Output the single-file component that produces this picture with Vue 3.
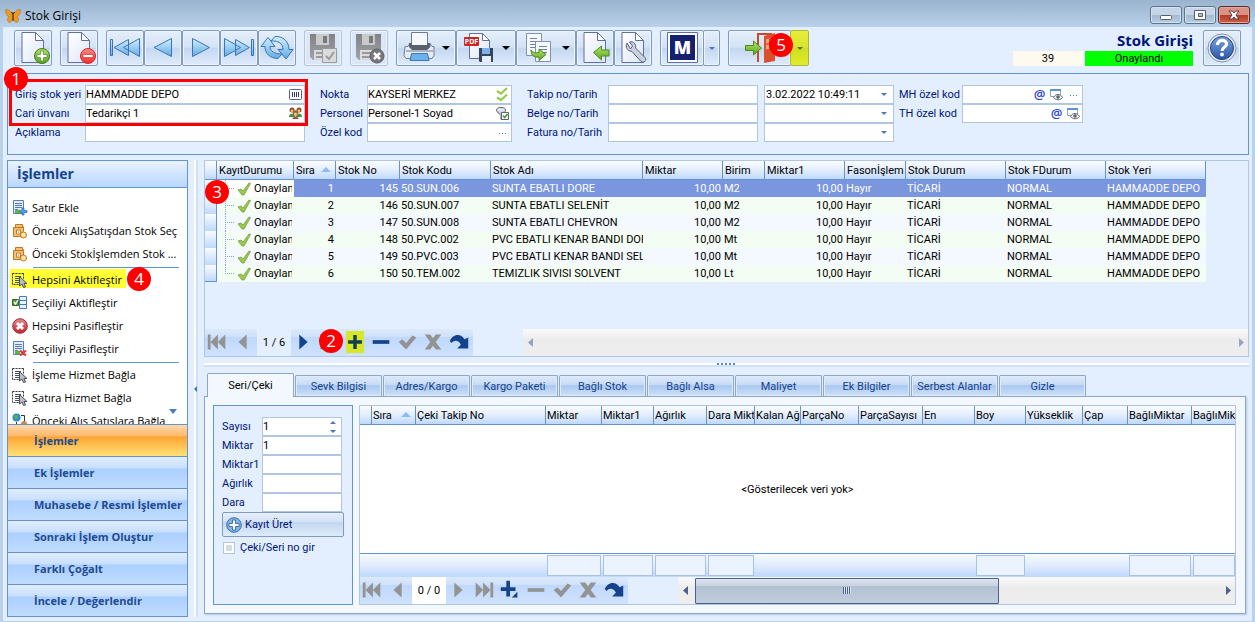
<script setup>
import { ref } from 'vue'

const page = '<path fill="url(#gPage)" stroke="#5f6f9f" d="M6 1.5h13.5l8 8v22H6z"/><path fill="#fff" stroke="#5f6f9f" d="M19.5 1.5v8h8z"/>'
const sheet = '<path fill="#dfeafc" stroke="#5a7cb8" d="M1.5.5h10v13h-10z"/><path stroke="#5a7cb8" d="M3 3.5h7M3 5.5h7M3 7.5h7M3 9.5h3"/><path fill="#5cb82c" d="M3 10h5v3H3z"/>'
const disk = '<path fill="url(#gDisk)" d="M4 3h25v26H7l-3-3z"/><path fill="#c9cacc" d="M10 3h13v11H10z"/><path fill="#77797c" d="M17 5h4v7h-4z"/><path fill="#d9dadc" d="M8 19h17v10H8z"/><path stroke="#98999c" stroke-width="2" d="M10 22h12M10 26h12"/>'
const cursor = '<path fill="none" stroke="#333" stroke-dasharray="2 1" d="M.5 1.5h11M.5 1.5v11h7M11.5 1.5v5"/><path stroke="#46536b" d="M3 4.5h6M3 6.5h5M3 8.5h5M3 10.5h4"/><path fill="#b9bdc6" stroke="#4b4f58" d="M7.500 4.500l7.500 7h-3l1.500 3.500-2 .5-1.500-3.500-2.500 2z"/>'
const crate = '<path fill="#f6bf6c" stroke="#b9792a" d="M1.500 4.500h10v9h-10zM3.500 4.500v-3h7v3"/><path fill="#fff" stroke="#c27a1e" d="M4.500 7h4v4h-4z"/><path fill="#b36b12" d="M6 8.500h1v1H6z"/><circle cx="11.500" cy="12" r="3" fill="#ffe2a0" stroke="#b9792a"/><path stroke="#b9792a" d="M11.500 3.500v5"/>'

const icons = {
  add: page + '<circle cx="26" cy="25" r="7.500" fill="url(#gGreen)" stroke="#3c7a12"/><path fill="#fff" stroke="#3c7a12" stroke-width=".6" d="M24.500 20h3v3.500H31v3h-3.500V30h-3v-3.500H21v-3h3.500z"/>',
  remove: page + '<circle cx="26" cy="25" r="7.500" fill="url(#gRed)" stroke="#d62828"/><path fill="#fff" stroke="#c02020" stroke-width=".6" d="M21 23.500h10v3H21z"/>',
  first: '<path fill="url(#gBlue)" stroke="#3b73b9" d="M2.500 8.500h2v16h-2zM20.500 8.500v16L6 16.500zM31.500 7.500v18l-16-9z"/>',
  prev: '<path fill="url(#gBlue)" stroke="#3b73b9" d="M25.500 7.500v18L8 16.500z"/>',
  next: '<path fill="url(#gBlue)" stroke="#3b73b9" d="M8.500 7.500v18l17-9z"/>',
  last: '<path fill="url(#gBlue)" stroke="#3b73b9" d="M29.500 8.500h2v16h-2zM13.500 8.500v16l14-8zM2.500 7.500v18l16-9z"/>',
  refresh: '<path fill="url(#gBlue)" stroke="#3b73b9" d="M10 15.500h5L8 6.500l-7 9h4c0 7 5 12 13 12l4-4.500c-8 0-12-3-12-7.500z"/><path fill="url(#gBlue)" stroke="#3b73b9" d="M23 18.500h-5l8 9.500 7-9.500h-4c0-8-6-13.500-14-13l-4 4.500c8-.5 12 3 12 8.500z"/>',
  saveOk: disk + '<path fill="#dadbdd" stroke="#9a9b9e" d="M16.500 17.500h14v14h-14z"/><path fill="none" stroke="#9a9b9e" stroke-width="2" d="M20 25l3 3 5-7"/>',
  saveNo: disk + '<circle cx="25" cy="25" r="7" fill="#77787b" stroke="#5f6063"/><path stroke="#fff" stroke-width="2.500" d="M22 22l6 6m0-6l-6 6"/>',
  print: '<path fill="url(#gPage)" stroke="#6d7b93" d="M9.500 1.500h16v14h-16z"/><path fill="#e7ebf2" stroke="#707d96" d="M3 15.500h3l2-3v3l3 3h14l3-3v-3l2 3h2v9l-2 3H4l-2-3z"/><path fill="#56606f" d="M7 12h21v4l-3 3H10l-3-3z"/><path fill="#f4f7fc" d="M10 5h15v9H10z"/><path stroke="#aab4c6" stroke-width="2" d="M4 20h27"/><path fill="#69b2ee" stroke="#4577ad" d="M9.500 22.500h16l1.500 7H8z"/>',
  pdf: '<path fill="url(#gPage)" stroke="#5f6f9f" d="M7.500 2.500h13l7 7v18h-20z"/><path fill="#fff" stroke="#5f6f9f" d="M20.500 2.500v7h7z"/><rect x="2" y="6" width="15" height="9" rx="1" fill="#cf2424"/><text x="9.500" y="13" text-anchor="middle" font-size="7" font-weight="700" fill="#fff" font-family="Open Sans, sans-serif">PDF</text><path fill="#35455e" d="M17 17h14v14H18l-1-1z"/><path fill="#7fb0ea" d="M20 17h8v6h-8z"/><path fill="#e7edf6" d="M20 25h9v6h-9z"/>',
  copy: '<path fill="#f6f9ff" stroke="#8190b0" d="M4.500 2.500h15v22h-15z"/><path stroke="#6f82a8" d="M8 7.500h7M8 10.500h8M8 13.500h5M8 16.500h5"/><path fill="#f6f9ff" stroke="#8190b0" d="M13.500 10.500h15v20h-15z"/><path stroke="#6f82a8" d="M17 15.500h8M17 18.500h8M17 21.500h8"/><path fill="url(#gGreen)" stroke="#4b8a18" d="M9 19c2 3 5 3 8 2.500v-3.500l7 5.500-7 6v-3.500c-6 1-8-3-8-7z"/>',
  pageIn: page + '<path fill="url(#gGreen)" stroke="#4b8a18" d="M15.500 21.500l8-6.500v4H31v6h-7.500v4z"/>',
  wrench: page + '<path fill="#c9d1df" stroke="#56627a" d="M11 12c-2 4 0 8 5 8.500l9 10c3 2 6-1 4-4l-9.500-9.500c1-4-2-7-6-6l3 4-2 3z"/>',
  logo: '<path fill="#fff" stroke="#5a6fa6" d="M2.500 1.500h30v30h-30z"/><path fill="#15206e" d="M5 4h25v25H5z"/><text x="17.500" y="23" text-anchor="middle" font-size="18" font-weight="800" fill="#fff" font-family="Open Sans, sans-serif">M</text>',
  exit: '<path fill="none" stroke="#c64a2d" stroke-width="2" d="M14 31V3h14"/><path fill="#d9512c" d="M20 5l11-3v28l-11 2z"/><path fill="#f2a581" d="M22 8l3-.5V12l-3 .5zM22 14l3-.5V18l-3 .5z"/><path fill="url(#gGreen)" stroke="#4b8a18" d="M1.500 14.500h8V10l8 7-8 7v-4.500h-8z"/>',
  help: '<circle cx="17" cy="17" r="14" fill="#e8edf6" stroke="#7e92b8"/><circle cx="17" cy="17" r="11.500" fill="url(#gHelp)" stroke="#23437f"/><path fill="none" stroke="#fff" stroke-width="3.200" d="M12.500 14c0-6 9-6 9-.8 0 3-4.500 3.300-4.500 6.800"/><circle cx="17" cy="23.500" r="1.900" fill="#fff"/>'
}

const smallIcons = {
  row: sheet + '<path fill="#4fa3e8" stroke="#2e69ad" stroke-width=".7" d="M10 8h2v2.500h3v2h-3V15h-2v-2.500H8v-2h2z"/>',
  crate,
  cursor,
  rowsOn: '<path fill="#e8f3ff" stroke="#4779b8" d="M7.500 1.500h7v12h-7zM7.500 5.500h7M7.500 9.500h7"/><path fill="#5f9a3a" stroke="#356a1c" d="M.5 4.500h6v6h-6z"/><path fill="none" stroke="#fff" stroke-width="1.300" d="M2 7l1.500 2L6 5"/>',
  off: '<circle cx="8" cy="8" r="7.300" fill="url(#gCross)" stroke="#9a3038"/><path stroke="#fff" stroke-width="3" d="M5 5l6 6m0-6l-6 6"/>',
  rowOff: sheet + '<path stroke="#d83a36" stroke-width="2.200" d="M8 9.500l6 5m0-5l-6 5"/>',
  link: '<circle cx="4.500" cy="4.500" r="4" fill="#2c8ad8"/><path fill="#5ab63a" d="M2 2h3l1 3-3 2z"/><path fill="none" stroke="#333" d="M9 2.500h3.500v6M4.500 9v5"/><circle cx="12" cy="11" r="3" fill="#c58a5a"/>',
  barcode: '<rect x="1.500" y="2.500" width="12" height="10" rx="1" fill="#fff" stroke="#4c62a0"/><path stroke="#333c66" d="M4.500 5v5M6.500 5v5M8.500 5v5M10.500 5v5"/>',
  people: '<circle cx="4" cy="4" r="2.500" fill="#8a4b1c"/><circle cx="11" cy="4" r="2.500" fill="#8a4b1c"/><circle cx="7.500" cy="7" r="2.700" fill="#a55f2a"/><circle cx="4" cy="4.800" r="1.300" fill="#f5c58d"/><circle cx="11" cy="4.800" r="1.300" fill="#f5c58d"/><circle cx="7.500" cy="8" r="1.500" fill="#f5c58d"/><path fill="#3f9440" d="M1 11c0-3 2-4 4-3l2.500 3L10 8c2-1 4 0 4 3z"/><path fill="#c83a2f" d="M4.500 13c0-3 6-3 6 0z"/>',
  checks: '<path fill="none" stroke="#9acb4d" stroke-width="2.200" d="M2 4l4 2.500L12 1M2 10.500L6 13l6-5.500"/>',
  person: '<ellipse cx="6" cy="4" rx="4.500" ry="2.500" fill="#e6e8f0" stroke="#5e6575"/><path fill="#cfd3dd" stroke="#5e6575" d="M2 5.500l4 4v4l1.500 0v-4l3-4"/><path fill="#fff" stroke="#5e6575" d="M6.500 6.500h7v7h-7z"/><path fill="none" stroke="#4c9a28" stroke-width="1.700" d="M8 9.500l1.700 2L12.500 8"/>',
  eye: '<path fill="#fff" stroke="#8aa9cf" d="M1.500 3.500h10v6h-10z"/><path fill="#5d94d6" d="M1 2h11v2H1z"/><path fill="#eef1f6" stroke="#5d6470" d="M4.500 10.500c2-4 7-4 9 0-2 3-7 3-9 0z"/><circle cx="9" cy="10" r="1.800" fill="#5d6470"/>'
}

const navIcons = {
  first: '<path d="M3 5h3v16H3zM14 5v16L6 13zM22 5v16l-8-8z"/>',
  prev: '<path d="M17 5v16L8 13z"/>',
  next: '<path d="M9 5v16l9-8z"/>',
  last: '<path d="M20 5h3v16h-3zM12 5v16l8-8zM4 5v16l8-8z"/>',
  add: '<path d="M11 4h4v7h7v4h-7v7h-4v-7H4v-4h7z"/>',
  addHl: '<path d="M10.500 3h5v7.500H23v5h-7.500V23h-5v-7.500H3v-5h7.500z"/>',
  addMore: '<path d="M9 3h4v7h6v4h-6v6H9v-6H3v-4h6zM21 15v6h-6z"/>',
  minus: '<path d="M4 11h18v4H4z"/>',
  check: '<path d="M4 13l4-3 4 4 7-8 4 2-11 13z"/>',
  cross: '<path d="M4 5h6l3 4 3-4h6l-6 8 6 8h-6l-3-4-3 4H4l6-8z"/>',
  redo: '<path d="M3 12C6 4 15 3 19 10l4-2v12H11l4-4c-2-5-7-6-10-2z"/>'
}

const toolGroups = [
  [{ i: 'add', t: 'Yeni' }], [{ i: 'remove', t: 'Sil' }],
  [{ i: 'first', t: 'İlk' }, { i: 'prev', t: 'Önceki' }, { i: 'next', t: 'Sonraki' }, { i: 'last', t: 'Son' }, { i: 'refresh', t: 'Yenile' }],
  [{ i: 'saveOk', t: 'Kaydet', off: true }], [{ i: 'saveNo', t: 'Vazgeç', off: true }],
  [{ i: 'print', t: 'Yazdır', menu: true }, { i: 'pdf', t: 'PDF kaydet', menu: true }, { i: 'copy', t: 'Kopyala', menu: true }, { i: 'pageIn', t: 'İçe al' }, { i: 'wrench', t: 'Ayarlar' }]
]

const formGroups = [
  { cls: 'g1', rows: [
    { id: 'yer', label: 'Giriş stok yeri', value: 'HAMMADDE DEPO', icons: ['barcode'] },
    { id: 'cari', label: 'Cari ünvanı', value: 'Tedarikçi 1', icons: ['people'] },
    { id: 'aciklama', label: 'Açıklama', value: '', icons: [] }] },
  { cls: 'g2', rows: [
    { id: 'nokta', label: 'Nokta', value: 'KAYSERİ MERKEZ', icons: ['checks'] },
    { id: 'personel', label: 'Personel', value: 'Personel-1 Soyad', icons: ['person'] },
    { id: 'ozel', label: 'Özel kod', value: '', icons: ['dots'] }] },
  { cls: 'g3', rows: [
    { id: 'takip', label: 'Takip no/Tarih', value: '', icons: [], date: '3.02.2022 10:49:11' },
    { id: 'belge', label: 'Belge no/Tarih', value: '', icons: [], date: '' },
    { id: 'fatura', label: 'Fatura no/Tarih', value: '', icons: [], date: '' }] },
  { cls: 'g4', rows: [
    { id: 'mh', label: 'MH özel kod', value: '', icons: ['at', 'eye', 'dots'] },
    { id: 'th', label: 'TH özel kod', value: '', icons: ['at', 'eye'] }] }
]

const actions = [
  { i: 'row', t: 'Satır Ekle' }, { i: 'crate', t: 'Önceki AlışSatışdan Stok Seç' }, { i: 'crate', t: 'Önceki Stokİşlemden Stok ...' },
  { i: 'cursor', t: 'Hepsini Aktifleştir', sep: true, hl: true }, { i: 'rowsOn', t: 'Seçiliyi Aktifleştir' }, { i: 'off', t: 'Hepsini Pasifleştir' }, { i: 'rowOff', t: 'Seçiliyi Pasifleştir' },
  { i: 'cursor', t: 'İşleme Hizmet Bağla', sep: true }, { i: 'cursor', t: 'Satıra Hizmet Bağla' }, { i: 'link', t: 'Önceki Alış Satışlara Bağla' }
]
const sections = ['İşlemler', 'Ek İşlemler', 'Muhasebe / Resmi İşlemler', 'Sonraki İşlem Oluştur', 'Farklı Çoğalt', 'İncele / Değerlendir']
const section = ref('İşlemler')

const stockCols = [
  ['', 12], ['KayıtDurumu', 77], ['Sıra', 42], ['Stok No', 64], ['Stok Kodu', 91], ['Stok Adı', 152], ['Miktar', 80], ['Birim', 42],
  ['Miktar1', 80], ['Fasonİşlem', 61], ['Stok Durum', 100], ['Stok FDurum', 100], ['Stok Yeri', 100]
]
const stock = [
  [145, '50.SUN.006', 'SUNTA EBATLI DORE', 'M2'], [146, '50.SUN.007', 'SUNTA EBATLI SELENİT', 'M2'],
  [147, '50.SUN.008', 'SUNTA EBATLI CHEVRON', 'M2'], [148, '50.PVC.002', 'PVC EBATLI KENAR BANDI DORE', 'Mt'],
  [149, '50.PVC.003', 'PVC EBATLI KENAR BANDI SELENİT', 'Mt'], [150, '50.TEM.002', 'TEMIZLIK SIVISI SOLVENT', 'Lt']
]
const serialCols = [
  ['', 12], ['Sıra', 44], ['Çeki Takip No', 130], ['Miktar', 56, true], ['Miktar1', 52, true], ['Ağırlık', 53, true], ['Dara Mikt', 48, true],
  ['Kalan Ağ', 46], ['ParçaNo', 58], ['ParçaSayısı', 64], ['En', 52], ['Boy', 51, true], ['Yükseklik', 57], ['Çap', 45], ['BağlıMiktar', 64, true], ['BağlıMikt', 44, true]
]
const tabs = ['Seri/Çeki', 'Sevk Bilgisi', 'Adres/Kargo', 'Kargo Paketi', 'Bağlı Stok', 'Bağlı Alsa', 'Maliyet', 'Ek Bilgiler', 'Serbest Alanlar', 'Gizle']
const tab = ref('Seri/Çeki')
const entry = [['Sayısı', '1'], ['Miktar', '1'], ['Miktar1', ''], ['Ağırlık', ''], ['Dara', '']]
const nav1 = [['first', 'off'], ['prev', 'off'], ['text', '1 / 6'], ['next', ''], ['last', ''], ['addHl', 'hl'], ['minus', ''], ['check', 'off'], ['cross', 'off'], ['redo', '']]
const nav2 = [['first', 'off'], ['prev', 'off'], ['text', '0 / 0'], ['next', 'off'], ['last', 'off'], ['addMore', ''], ['minus', 'off'], ['check', 'off'], ['cross', 'off'], ['redo', '']]
const navs = { stock: nav1, serial: nav2 }
</script>

<template>
  <div class="window">
    <svg class="defs" width="0" height="0" aria-hidden="true">
      <defs>
        <linearGradient id="gPage" x2="1" y2="1"><stop stop-color="#fff" /><stop offset="1" stop-color="#dde6f7" /></linearGradient>
        <linearGradient id="gBlue" x2="0" y2="1"><stop stop-color="#d3effd" /><stop offset="1" stop-color="#62abe3" /></linearGradient>
        <linearGradient id="gGreen" x2="0" y2="1"><stop stop-color="#b8e26a" /><stop offset="1" stop-color="#58a41f" /></linearGradient>
        <linearGradient id="gRed" x2="0" y2="1"><stop stop-color="#ff8c86" /><stop offset="1" stop-color="#f22b2b" /></linearGradient>
        <linearGradient id="gCross" x2="0" y2="1"><stop stop-color="#e58a8c" /><stop offset="1" stop-color="#c81e2a" /></linearGradient>
        <linearGradient id="gDisk" x2="0" y2="1"><stop stop-color="#808285" /><stop offset="1" stop-color="#a2a3a6" /></linearGradient>
        <linearGradient id="gHelp" x2="0" y2="1"><stop stop-color="#7ba4dc" /><stop offset="1" stop-color="#2a57a8" /></linearGradient>
      </defs>
    </svg>

    <header class="titlebar">
      <svg class="app-icon" viewBox="0 0 16 16" width="16" height="16" aria-hidden="true">
        <path fill="#ef9a1f" stroke="#a8661c" stroke-width=".5" d="M8 7C6 3 3 1 .8 1.500 0 5 2 8 4 9c-2 1-2 4 0 5.500C6 15 7 12 8 10c1 2 2 5 4 4.500 2-1.500 2-4.500 0-5.500 2-1 4-4 3.200-7.500C13 1 10 3 8 7z" />
        <path stroke="#4a2a10" stroke-width="1.200" d="M8 6v7M8 6L6.500 4M8 6l1.500-2" />
      </svg>
      <span class="caption">Stok Girişi</span>
      <div class="wbtns">
        <button class="wbtn" aria-label="Küçült"><svg viewBox="0 0 30 16" width="30" height="16"><rect x="9.500" y="8.500" width="11" height="4" rx="1" fill="#fff" stroke="#555e70" /></svg></button>
        <button class="wbtn" aria-label="Ekranı kapla"><svg viewBox="0 0 30 16" width="30" height="16"><path fill="#fff" stroke="#555e70" fill-rule="evenodd" d="M9.500 3.500h11v9h-11zM13.500 6.500v3h4v-3z" /></svg></button>
        <button class="wbtn close" aria-label="Kapat"><svg viewBox="0 0 30 16" width="30" height="16"><path fill="#fff" stroke="#5c3038" d="M10 4h3.500l1.500 2 1.500-2H20l-3 4 3 4h-3.500L15 10l-1.500 2H10l3-4z" /></svg></button>
      </div>
    </header>

    <main class="client">
      <div class="toolbar">
        <div v-for="(g, n) in toolGroups" :key="n" class="tgroup">
          <button v-for="b in g" :key="b.i" class="tbtn" :class="{ menu: b.menu, off: b.off }" :aria-label="b.t">
            <svg viewBox="0 0 34 34" width="34" height="34" v-html="icons[b.i]"></svg>
            <svg v-if="b.menu" class="caret" viewBox="0 0 8 4" width="8" height="4"><path d="M0 0h8L4 4z" /></svg>
          </button>
        </div>
        <div class="tgroup split">
          <button class="tbtn logo" aria-label="M"><svg viewBox="0 0 34 34" width="34" height="34" v-html="icons.logo"></svg></button>
          <button class="tbtn arrow" aria-label="M seçenekleri"><svg class="caret blue" viewBox="0 0 6 3" width="6" height="3"><path d="M0 0h6L3 3z" /></svg></button>
        </div>
        <div class="tgroup split">
          <button class="tbtn exit" aria-label="Çıkış"><svg viewBox="0 0 34 34" width="34" height="34" v-html="icons.exit"></svg></button>
          <button class="tbtn arrow yellow" aria-label="Çıkış seçenekleri"><svg class="caret" viewBox="0 0 6 3" width="6" height="3"><path d="M0 0h6L3 3z" /></svg></button>
          <span class="badge b5">5</span>
        </div>
        <div class="status">
          <h1>Stok Girişi</h1>
          <div class="chips"><span class="num">39</span><span class="ok">Onaylandı</span></div>
        </div>
        <button class="tbtn help" aria-label="Yardım"><svg viewBox="0 0 34 34" width="34" height="34" v-html="icons.help"></svg></button>
      </div>

      <section class="form">
        <div v-for="g in formGroups" :key="g.cls" class="fgroup" :class="g.cls">
          <div v-for="r in g.rows" :key="r.id" class="frow">
            <label :for="r.id">{{ r.label }}</label>
            <div class="fld">
              <input :id="r.id" type="text" :value="r.value">
              <button v-for="i in r.icons" :key="i" class="fbtn" :class="i" :aria-label="r.label + ' ' + i">
                <template v-if="i === 'at'">@</template>
                <svg v-else-if="i === 'dots'" viewBox="0 0 14 14" width="14" height="14"><path fill="#4a78bd" d="M3 7h1v1H3zM6 7h1v1H6zM9 7h1v1H9z" /></svg>
                <svg v-else viewBox="0 0 15 15" width="15" height="15" v-html="smallIcons[i]"></svg>
              </button>
            </div>
            <div v-if="r.date !== undefined" class="fld date">
              <select :aria-label="r.label + ' tarihi'"><option>{{ r.date }}</option></select>
              <svg class="caret blue" viewBox="0 0 6 3" width="6" height="3"><path d="M0 0h6L3 3z" /></svg>
            </div>
          </div>
        </div>
        <div class="frame-mark"></div>
        <span class="badge b1">1</span>
      </section>

      <div class="work">
        <aside class="side">
          <h2>İşlemler</h2>
          <div class="actions">
            <button v-for="a in actions" :key="a.t" class="action" :class="{ sep: a.sep, hl: a.hl }">
              <span class="line"><svg viewBox="0 0 16 16" width="16" height="16" v-html="smallIcons[a.i]"></svg><span>{{ a.t }}</span></span>
              <span v-if="a.hl" class="badge b4">4</span>
            </button>
            <svg class="more" viewBox="0 0 8 5" width="8" height="5"><path fill="#4a7cc4" d="M0 0h8L4 5z" /></svg>
          </div>
          <button v-for="s in sections" :key="s" class="section" :class="{ on: s === section }" @click="section = s">{{ s }}</button>
        </aside>

        <div class="vsplit"><svg viewBox="0 0 3 6" width="3" height="6"><path fill="#3d73bb" d="M3 0v6L0 3z" /></svg></div>

        <div class="main">
          <section class="pane stock">
            <div class="tablewrap">
              <table>
                <colgroup><col v-for="c in stockCols" :key="c[0]" :style="{ width: c[1] + 'px' }"></colgroup>
                <thead>
                  <tr><th v-for="c in stockCols" :key="c[0]">{{ c[0] }}<svg v-if="c[0] === 'Sıra'" class="sort" viewBox="0 0 10 5" width="10" height="5"><path d="M0 5h10L5 0z" /></svg></th></tr>
                </thead>
                <tbody>
                  <tr v-for="(r, n) in stock" :key="r[0]" :class="{ sel: n === 0 }">
                    <td class="ind"></td>
                    <td class="state"><span><i class="tree"></i><svg viewBox="0 0 14 14" width="14" height="14"><path fill="#9acb45" stroke="#7a9b52" stroke-width=".8" d="M1 8l3-1 2 2 6-8 1.500.5L7 13H5z" /></svg>Onaylandı</span></td>
                    <td class="n">{{ n + 1 }}</td>
                    <td class="n">{{ r[0] }}</td>
                    <td>{{ r[1] }}</td>
                    <td>{{ r[2] }}</td>
                    <td class="n">10,00</td>
                    <td>{{ r[3] }}</td>
                    <td class="n">10,00</td>
                    <td>Hayır</td>
                    <td>TİCARİ</td>
                    <td>NORMAL</td>
                    <td>HAMMADDE DEPO</td>
                  </tr>
                </tbody>
              </table>
            </div>
            <div class="navrow">
              <div class="nav">
                <template v-for="b in navs.stock" :key="b[0]">
                  <span v-if="b[0] === 'text'" class="pos">{{ b[1] }}</span>
                  <button v-else :class="b[1]" :aria-label="b[0]"><svg viewBox="0 0 26 26" width="26" height="26" v-html="navIcons[b[0]]"></svg></button>
                </template>
                <span class="badge b2">2</span>
              </div>
              <div class="scroll idle">
                <svg viewBox="0 0 5 9" width="5" height="9"><path d="M5 0v9L0 4.500z" /></svg>
                <svg viewBox="0 0 5 9" width="5" height="9"><path d="M0 0v9l5-4.500z" /></svg>
              </div>
            </div>
            <span class="badge b3">3</span>
          </section>

          <div class="hsplit"><i></i></div>

          <section class="bottom">
            <div class="tabs" role="tablist">
              <button v-for="t in tabs" :key="t" role="tab" :aria-selected="t === tab" :class="{ on: t === tab }" @click="tab = t">{{ t }}</button>
            </div>
            <div class="tabpanel">
              <div class="entry">
                <div v-for="(e, n) in entry" :key="e[0]" class="frow">
                  <label :for="'e' + n">{{ e[0] }}</label>
                  <div class="fld">
                    <input :id="'e' + n" :type="n === 0 ? 'number' : 'text'" :value="e[1]">
                    <svg v-if="n === 0" class="spin" viewBox="0 0 6 12" width="6" height="12"><path d="M0 3h6L3 0zM0 9h6l-3 3z" /></svg>
                  </div>
                </div>
                <button class="make">
                  <svg viewBox="0 0 16 16" width="16" height="16"><circle cx="8" cy="8" r="7.300" fill="#7fb6e8" stroke="#3c6faf" /><path fill="#fff" stroke="#2c5b99" stroke-width=".8" d="M6.500 3h3v3.500H13v3H9.500V13h-3V9.500H3v-3h3.500z" /></svg>
                  Kayıt Üret
                </button>
                <label class="check"><input type="checkbox">Çeki/Seri no gir</label>
              </div>

              <div class="pane serial">
                <div class="tablewrap">
                  <table>
                    <colgroup><col v-for="c in serialCols" :key="c[0]" :style="{ width: c[1] + 'px' }"></colgroup>
                    <thead>
                      <tr><th v-for="c in serialCols" :key="c[0]">{{ c[0] }}<svg v-if="c[0] === 'Sıra'" class="sort" viewBox="0 0 10 5" width="10" height="5"><path d="M0 5h10L5 0z" /></svg></th></tr>
                    </thead>
                    <tbody><tr><td class="empty" colspan="16">&lt;Gösterilecek veri yok&gt;</td></tr></tbody>
                    <tfoot><tr><td v-for="c in serialCols" :key="c[0]"><div v-if="c[2]" class="sum"></div></td></tr></tfoot>
                  </table>
                </div>
                <div class="navrow">
                  <div class="nav">
                    <template v-for="b in navs.serial" :key="b[0]">
                      <span v-if="b[0] === 'text'" class="pos">{{ b[1] }}</span>
                      <button v-else :class="b[1]" :aria-label="b[0]"><svg viewBox="0 0 26 26" width="26" height="26" v-html="navIcons[b[0]]"></svg></button>
                    </template>
                  </div>
                  <div class="scroll">
                    <svg viewBox="0 0 5 9" width="5" height="9"><path d="M5 0v9L0 4.500z" /></svg>
                    <div class="track"><div class="thumb"><i></i></div></div>
                    <svg viewBox="0 0 5 9" width="5" height="9"><path d="M0 0v9l5-4.500z" /></svg>
                  </div>
                </div>
              </div>
            </div>
          </section>
        </div>
      </div>
    </main>
  </div>
</template>

<style>
body { margin: 0; }
</style>

<style scoped>
* { box-sizing: border-box; }
.window { height: 100vh; min-height: 600px; display: flex; flex-direction: column; padding: 0 3px 1px; background: #b9d1ea; font-family: Roboto, "Liberation Sans", sans-serif; font-size: 11px; line-height: 13px; color: #000; overflow: hidden; }
button, input, select { font: inherit; color: inherit; margin: 0; }
button { padding: 0; border: 0; background: none; }
svg { display: block; flex: none; }
.defs { position: absolute; }
h1, h2 { margin: 0; }

.titlebar { height: 27px; flex: none; display: flex; align-items: center; margin: 0 -3px; padding: 4px 5px 0 5px; background: linear-gradient(#9ab3ce, #b9d1ea); }
.caption { margin-left: 4px; font: 12px/16px "Open Sans", sans-serif; flex: 1; }
.wbtns { display: flex; gap: 2px; align-self: flex-start; margin-top: 2px; }
.wbtn { width: 32px; height: 18px; border: 1px solid #5f7389; border-radius: 3px; background: linear-gradient(#c5d5e7 50%, #a3b9d2 50%, #b8cde3); box-shadow: inset 0 0 0 1px #d5e2f0; }
.wbtn.close { background: linear-gradient(#d99385 50%, #b83a22 50%, #c9614a); border-color: #5a2a28; box-shadow: inset 0 0 0 1px #e3a79b; }

.client { flex: 1; min-height: 0; display: flex; flex-direction: column; padding: 3px 3px 4px 4px; background: #e3efff; }
.toolbar { display: flex; height: 36px; flex: none; padding: 0 8px 0 7px; gap: 8px; }
.tgroup { display: flex; }
.tbtn { width: 38px; height: 36px; display: flex; align-items: center; justify-content: center; border: 1px solid #7f9cc6; border-radius: 2px; background: linear-gradient(#e6effb, #d3e2f5 48%, #c3d7f0 50%, #dfebfa); box-shadow: inset 0 0 0 1px #edf4fd; flex: none; }
.tbtn.menu { width: 60px; gap: 6px; }
.tbtn.off { border-color: #b2c3de; background: #dbe7f7; }
.caret { fill: #000; }
.caret.blue { fill: #4a78bd; }
.split { position: relative; }
.tbtn.logo { width: 44px; }
.tbtn.exit { width: 63px; padding-left: 2px; }
.tbtn.arrow { width: 17px; margin-left: -1px; }
.tbtn.yellow { width: 19px; background: linear-gradient(#e9ee3c, #dbe32c 48%, #cfdc1f 50%, #e3ec2c); box-shadow: none; border-color: #a9b83c; }
.tbtn.yellow .caret { fill: #58703a; }
.status { margin-left: auto; width: 180px; }
.status h1 { font: 700 15px/21px "Open Sans", sans-serif; color: #00157a; text-align: right; }
.chips { display: flex; gap: 2px; height: 15px; line-height: 16px; text-align: center; }
.num { width: 70px; background: #fffaf0; }
.ok { flex: 1; background: #0f0; }
.tbtn.help { margin-left: 2px; }

.badge { position: absolute; z-index: 3; width: 24px; height: 24px; border-radius: 50%; background: #f00; color: #fff; font: 17px/23px "Open Sans", sans-serif; text-align: center; }
.b5 { left: 41px; top: 3px; }
.b1 { left: -4px; top: -7px; }
.b2 { left: 114px; top: 0; }
.b3 { left: 0; top: 19px; }
.b4 { left: 119px; bottom: 1px; }
.frame-mark { position: absolute; left: 1px; top: 5px; width: 299px; height: 47px; border: 3px solid #f00; }

.form { position: relative; flex: none; display: flex; margin: 7px 0 5px; padding: 11px 7px 12px; border: 1px solid #6593cf; color: #00157a; }
.frow { display: flex; height: 19px; align-items: center; }
.fgroup .frow label { flex: none; }
.g1 label { width: 70px; } .g1 .fld { width: 220px; }
.g2 { margin-left: 15px; } .g2 label { width: 47px; } .g2 .fld { width: 145px; }
.g3 { margin-left: 15px; } .g3 label { width: 81px; } .g3 .fld { width: 150px; } .g3 .fld.date { width: 130px; margin-left: 6px; }
.g4 { margin-left: 5px; } .g4 label { width: 63px; } .g4 .fld { width: 121px; }
.fld { display: flex; align-items: center; height: 19px; border: 1px solid #b1c6e2; background: #fff; color: #000; }
.fld input, .fld select { flex: 1; min-width: 0; width: 10px; height: 17px; border: 0; padding: 0; background: none; outline: 0; appearance: none; }
.fld select { padding-left: 1px; }
.fld input[type=number] { appearance: textfield; }
.fld input::-webkit-inner-spin-button { appearance: none; }
.fbtn { width: 17px; display: flex; justify-content: center; }
.fbtn.at { font: 600 13px/15px "Open Sans", sans-serif; color: #1f3fe0; }
.date .caret { margin-right: 6px; }

.work { flex: 1; min-height: 0; display: flex; gap: 6px; }
.side { width: 181px; flex: none; display: flex; flex-direction: column; border: 1px solid #6593cf; background: #fff; font: 11px/16px "Open Sans", sans-serif; }
.side h2 { flex: none; height: 27px; padding-left: 9px; font: 700 14px/26px "Open Sans", sans-serif; color: #15428b; background: linear-gradient(#e9f2ff, #b9d7ff); border-bottom: 1px solid #6593cf; }
.actions { position: relative; flex: 1; min-height: 0; overflow: hidden; padding-top: 9px; }
.action { position: relative; display: block; width: 100%; height: 23px; text-align: left; white-space: nowrap; }
.action.sep { height: 26px; padding-top: 3px; }
.action.sep::before { content: ""; position: absolute; left: 25px; right: 8px; top: 1px; border-top: 1px solid #6593cf; }
.line { display: inline-flex; align-items: center; gap: 4px; margin-left: 2px; padding: 2px 4px 0 2px; height: 19px; }
.hl .line { background: #ff3; }
.more { position: absolute; right: 10px; bottom: 10px; }
.section { flex: none; height: 32px; border-top: 1px solid #6593cf; padding-left: 26px; text-align: left; white-space: nowrap; font-weight: 700; color: #1e4a90; background: linear-gradient(#e0edff, #c9dfff 36%, #aacfff 38%, #c1dcff); }
.section.on { background: linear-gradient(#ffd9ab, #ffb769 36%, #fea533 38%, #ffe177); }
.vsplit { width: 4px; flex: none; display: flex; align-items: center; background: linear-gradient(90deg, #fff 50%, #cfe1fa 50%); }
.main { flex: 1; min-width: 0; display: flex; flex-direction: column; }

.pane { position: relative; display: flex; flex-direction: column; min-width: 0; border: 1px solid #b1c6e2; }
.pane.stock { flex: none; height: 197px; }
.tablewrap { flex: 1; min-height: 0; overflow: hidden; }
table { border-collapse: separate; border-spacing: 0; table-layout: fixed; }
.stock table { width: 1001px; }
th { position: relative; height: 19px; padding: 0 0 0 2px; text-align: left; font-weight: 400; white-space: nowrap; overflow: hidden; border-right: 1px solid #6593cf; border-bottom: 1px solid #6593cf; background: linear-gradient(#fafcff, #e3eefe 50%, #bfd8fc); }
.sort { position: absolute; right: 4px; top: 6px; fill: #8dbcf5; }
td { height: 17px; padding: 0 2px 0 1px; white-space: nowrap; overflow: hidden; background: #f4f9ff; }
.stock tbody tr:nth-child(even) td { background: #f3fdf3; }
.stock tbody tr.sel td { background: #7a96df; color: #fff; }
.stock tbody tr.sel td.state { background: #fff; color: #000; }
.stock tbody tr td.ind { background: linear-gradient(#fafcff, #bfd8fc); border-right: 1px solid #6593cf; }
tr:last-child td.ind { border-bottom: 1px solid #6593cf; }
td.n { text-align: right; }
td.state { padding: 0; }
.state span { display: flex; align-items: center; height: 17px; width: 75px; padding-left: 8px; gap: 3px; overflow: hidden; }
.tree { width: 9px; height: 17px; flex: none; background: repeating-linear-gradient(#8aa4c8 0 1px, transparent 1px 2px) 0 0 / 1px 17px no-repeat, repeating-linear-gradient(90deg, #8aa4c8 0 1px, transparent 1px 2px) 0 8px / 9px 1px no-repeat; }
tr:last-child .tree { background-size: 1px 9px, 9px 1px; }

.navrow { flex: none; display: flex; height: 27px; background: #e3efff; }
.nav { position: relative; display: flex; flex: none; width: 268px; background: linear-gradient(#dce9fb, #cfe1fa 28%, #bfd8fc 30%, #cfe2fd); }
.nav button { width: 26px; height: 26px; }
.nav svg { fill: #15428b; width: 24px; height: 24px; }
.nav .off svg { fill: #939393; }
.nav .hl svg { width: 18px; height: 22px; margin-left: 3px; background: #d8e629; fill: #123f52; }
.pos { width: 34px; text-align: center; line-height: 27px; background: #e3efff; }
.serial .pos { background: #fff; }
.scroll { flex: 1; min-width: 0; margin-left: 50px; display: flex; align-items: center; justify-content: space-between; padding: 0 4px 0 5px; background: linear-gradient(#fafafa, #ececec 40%, #eee); }
.scroll svg { fill: #4c5f8e; }
.scroll.idle svg { fill: #94a4c8; }
.track { flex: 1; height: 26px; margin: 0 7px; }
.thumb { width: 58%; height: 26px; display: flex; align-items: center; justify-content: center; border: 1px solid #4c5f8e; border-radius: 1px; background: linear-gradient(#dde4ec, #c9d3df 28%, #b1c0d2 30%, #c1cddb); }
.thumb i { width: 8px; height: 7px; background: repeating-linear-gradient(90deg, #4c5f8e 0 1px, #dde4ec 1px 2px); }

.hsplit { flex: none; height: 4px; margin: 6px 0; display: flex; justify-content: center; background: linear-gradient(#fff 50%, #cfe1fa 50%); }
.hsplit i { width: 19px; height: 2px; background: repeating-linear-gradient(90deg, #5e86c0 0 2px, #fff 2px 4px); }

.bottom { flex: 1; min-height: 0; display: flex; flex-direction: column; padding: 0 3px 3px 0; }
.tabs { display: flex; height: 23px; padding-left: 3px; align-items: flex-end; gap: 1px; }
.tabs button { width: 87px; height: 21px; flex: none; border: 1px solid #8ba5cf; border-bottom: 0; border-radius: 2px 2px 0 0; color: #15428b; background: linear-gradient(#dfeafa, #c5d9f5 46%, #a9c7f0 48%, #cfe1fa); box-shadow: inset 0 0 0 1px #e0ebfa; }
.tabs button.on { position: relative; z-index: 1; height: 24px; margin-bottom: -1px; color: #000; background: #f3f8ff; box-shadow: none; }
.tabpanel { flex: 1; min-height: 0; display: flex; gap: 6px; padding: 8px 9px 8px 8px; border: 1px solid #8ba5cf; background: #f3f8ff; box-shadow: 1px 1px 2px #b1c6e2; }
.entry { width: 140px; flex: none; padding: 11px 8px; border: 1px solid #6593cf; background: #e3efff; color: #00157a; }
.entry .frow label { width: 40px; flex: none; }
.entry .fld { width: 80px; }
.spin { margin-right: 5px; fill: #4a78bd; }
.make { display: flex; align-items: center; gap: 3px; width: 122px; height: 25px; padding-left: 3px; border: 1px solid #7f9cc6; border-radius: 2px; background: linear-gradient(#e6effb, #d3e2f5 38%, #c3d7f0 40%, #dfebfa); }
.check { display: flex; align-items: center; margin-top: 4px; height: 13px; }
.check input { appearance: none; width: 12px; height: 12px; margin: 0 5px 0 1px; border: 1px solid #b1c6e2; background: #d4dbe4; box-shadow: inset 0 0 0 2px #fff; }
.serial { flex: 1; }
.serial table { width: 100%; height: 100%; }
.serial thead tr, .serial th { height: 19px; }
.serial th { padding-left: 1px; }
.serial td { background: #fff; }
.serial td.empty { text-align: center; }
.serial tfoot tr { height: 24px; }
.serial tfoot td { height: 24px; padding: 1px 0; border-top: 1px solid #6593cf; background: linear-gradient(#f7faff, #e0ecfe 50%, #bfd8fc); }
.sum { height: 21px; margin: 0 1px; border: 1px solid #a9c3e8; background: #eaf3ff; }
</style>
